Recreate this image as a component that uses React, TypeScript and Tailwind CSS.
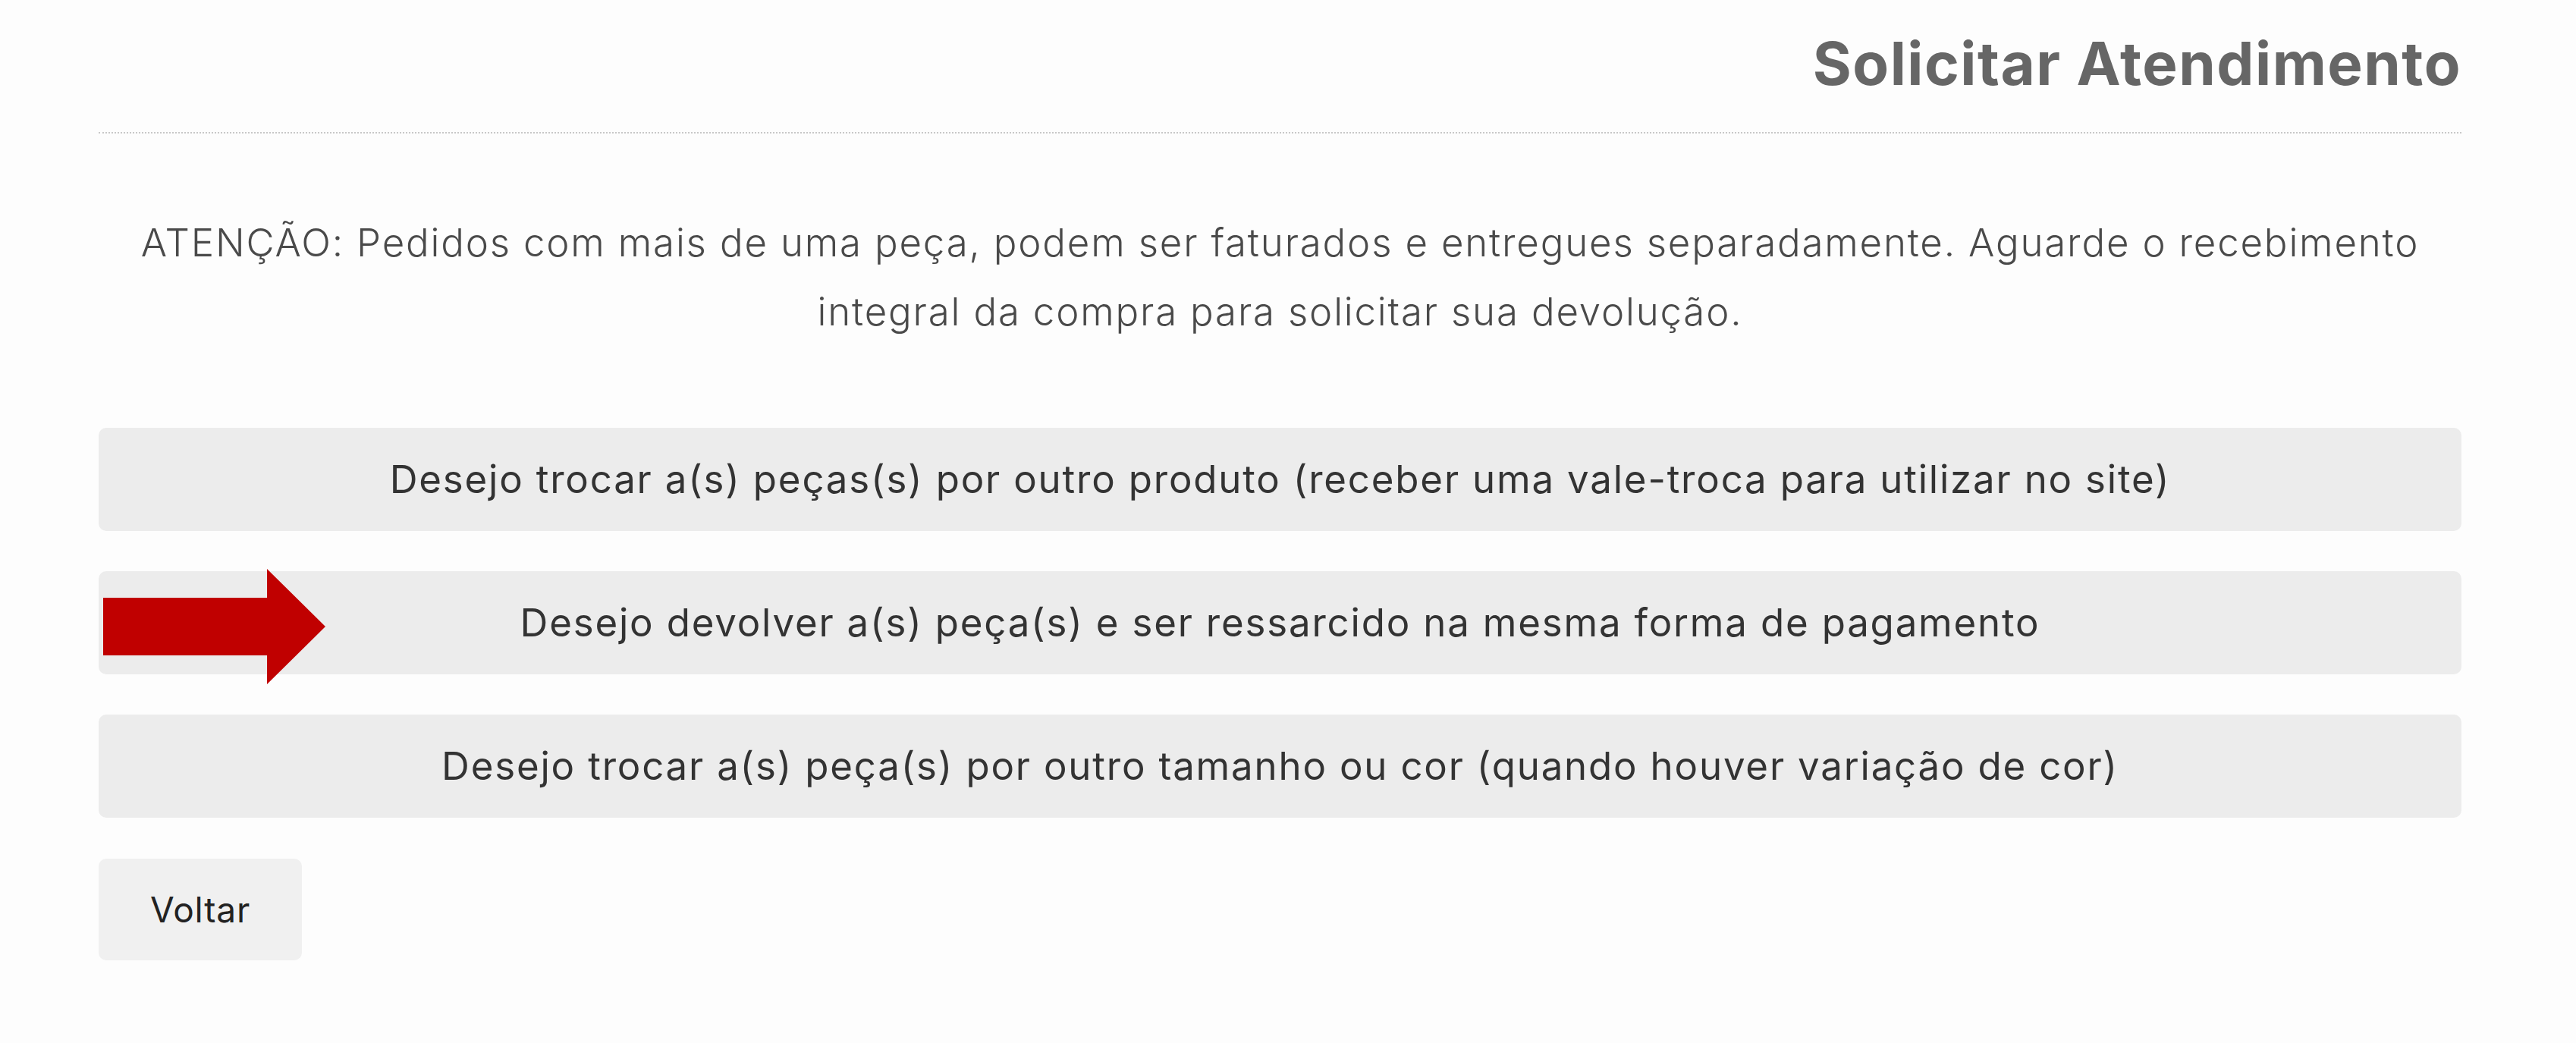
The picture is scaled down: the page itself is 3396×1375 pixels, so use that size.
import { useState } from "react";

const options = [
  "Desejo trocar a(s) peças(s) por outro produto (receber uma vale-troca para utilizar no site)",
  "Desejo devolver a(s) peça(s) e ser ressarcido na mesma forma de pagamento",
  "Desejo trocar a(s) peça(s) por outro tamanho ou cor (quando houver variação de cor)",
];

function RedArrow() {
  return (
    <svg
      className="absolute left-[6px] top-[-3px] w-[293px] h-[152px] pointer-events-none"
      viewBox="0 0 293 152"
      aria-hidden="true"
    >
      <polygon points="0,38 216,38 216,0 293,76 216,152 216,114 0,114" fill="#c00000" />
    </svg>
  );
}

export default function App() {
  const [selected, setSelected] = useState<number | null>(null);

  return (
    <div className="min-h-screen bg-[#fdfdfd] font-['Inter',sans-serif]">
      <div className="ml-[130px] w-[3115px] pt-[34px]">
        {/* Titulo */}
        <h2 className="text-right text-[78px] leading-[100px] font-bold text-[#666666] tracking-[1.5px]">
          Solicitar Atendimento
        </h2>
        <div className="mt-[40px] border-t-2 border-dotted border-[#c8c8c8]" />

        {/* Aviso */}
        <p className="mt-[98px] px-[30px] text-center text-[51px] leading-[91px] font-light text-[#4a4a4a] tracking-[1.8px]">
          ATENÇÃO: Pedidos com mais de uma peça, podem ser faturados e entregues separadamente. Aguarde o
          recebimento integral da compra para solicitar sua devolução.
        </p>

        {/* Opcoes */}
        <div className="mt-[108px] flex flex-col gap-[53px]">
          {options.map((label, i) => (
            <div key={label} className="relative">
              <button
                onClick={() => setSelected(i)}
                className={`w-full h-[136px] rounded-[10px] flex items-center justify-center text-[51px] text-[#333333] tracking-[1.8px] ${
                  selected === i ? "bg-[#e4e4e4]" : "bg-[#ececec]"
                }`}
              >
                {label}
              </button>
              {i === 1 && <RedArrow />}
            </div>
          ))}
        </div>

        <button className="mt-[54px] w-[268px] h-[134px] rounded-[10px] bg-[#f0f0f0] text-[46px] text-[#222222] tracking-[0.8px]">
          Voltar
        </button>
      </div>
    </div>
  );
}
